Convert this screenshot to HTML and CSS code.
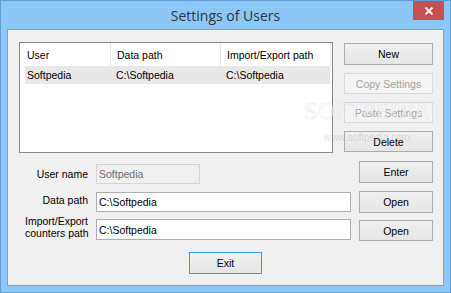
FILE: index.html
```html
<!DOCTYPE html>
<html lang="en">
  <head>
    <meta charset="UTF-8">
    <title>Settings of Users</title>
    <link rel="stylesheet" href="styles.css">
  </head>
  <body>
    <div class="window">
      <div class="titlebar">
        <span></span>
        <span class="title">Settings of Users</span>
        <a class="close" href="#close">
          <svg width="10" height="8" viewBox="0 0 10 8">
            <path d="M1.5 0.5 L8.5 7.5 M8.5 0.5 L1.5 7.5" stroke="#fff" stroke-width="1.8" fill="none"/>
          </svg>
        </a>
      </div>

      <div class="client">
        <div class="top">
          <div class="list">
            <div class="list-head">
              <div class="col col-user">User</div>
              <div class="col col-data">Data path</div>
              <div class="col col-io">Import/Export path</div>
            </div>
            <div class="list-row">
              <div class="cell cell-user">Softpedia</div>
              <div class="cell cell-data">C:\Softpedia</div>
              <div class="cell cell-io">C:\Softpedia</div>
            </div>
          </div>
          <div class="side-buttons">
            <button class="btn btn-new">New</button>
            <button class="btn" disabled>Copy Settings</button>
            <button class="btn" disabled>Paste Settings</button>
            <button class="btn">Delete</button>
          </div>
        </div>

        <div class="form">
          <div class="row row-user">
            <label class="label">User name</label>
            <input class="field field-short" value="Softpedia" disabled>
            <button class="btn btn-small">Enter</button>
          </div>
          <div class="row row-data">
            <label class="label">Data path</label>
            <input class="field" value="C:\Softpedia">
            <button class="btn btn-small">Open</button>
          </div>
          <div class="row row-io">
            <label class="label">Import/Export<br>counters path</label>
            <input class="field" value="C:\Softpedia">
            <button class="btn btn-small">Open</button>
          </div>
        </div>

        <div class="bottom">
          <button class="btn btn-exit">Exit</button>
        </div>

        <div class="watermark">
          <span class="wm-big">SOFTPEDIA</span>
          <span class="wm-small">www.softpedia.com</span>
        </div>
      </div>
    </div>
  </body>
</html>
```

FILE: styles.css
```css
/* Page */
body {
  margin: 0;
  font-family: "Liberation Sans", Arial, sans-serif;
  font-size: 10.5px;
  color: #000;
}

/* Window frame */
.window {
  width: 451px;
  height: 293px;
  box-sizing: border-box;
  border: 1px solid #5e9dd6;
  background-color: #8cc7f8;
  padding: 0 6px 6px;
  display: flex;
  flex-direction: column;
}

.titlebar {
  height: 28px;
  display: grid;
  grid-template-columns: 1fr auto 1fr;
}

.title {
  font-family: "Open Sans", "Noto Sans", sans-serif;
  font-size: 14px;
  color: #2a3440;
  line-height: 29px;
}

.close {
  justify-self: end;
  width: 31px;
  height: 19px;
  background-color: #c75050;
  display: flex;
  justify-content: center;
  align-items: center;
}

.client {
  flex: 1;
  position: relative;
  border: 1px solid #6ea6da;
  background-color: #f0f0f0;
}

/* List and side buttons */
.top {
  display: flex;
  padding: 12px 0 0 11px;
}

.list {
  width: 314px;
  height: 111px;
  box-sizing: border-box;
  border: 1px solid #828790;
  background-color: #fff;
}

.list-head {
  display: flex;
  height: 23px;
}

.col {
  box-sizing: border-box;
  border-right: 1px solid #e3e9f1;
  line-height: 24px;
  padding-left: 6px;
}

.col-user {
  width: 91px;
  padding-left: 7px;
}

.col-data,
.col-io {
  width: 110px;
}

.list-row {
  display: flex;
  margin-left: 5px;
  width: 305px;
  height: 18px;
  line-height: 18px;
  background-color: #e8e8e8;
}

.cell {
  box-sizing: border-box;
  padding-left: 6px;
}

.cell-user {
  width: 85px;
  padding-left: 2px;
}

.cell-data,
.cell-io {
  width: 110px;
}

.side-buttons {
  display: flex;
  flex-direction: column;
  gap: 8px;
  margin-left: 11px;
  padding-top: 1px;
}

.btn {
  font-family: "Liberation Sans", Arial, sans-serif;
  font-size: 10.5px;
  color: #000;
  width: 89px;
  height: 21px;
  padding: 0;
  box-sizing: border-box;
  border: 1px solid #acacac;
  background: linear-gradient(#f0f0f0, #e5e5e5);
}

.btn-new {
  height: 22px;
}

.btn:disabled {
  color: #a3a3a3;
  border-color: #d9d9d9;
  background: #f4f4f4;
}

/* Form rows */
.form {
  padding: 8px 10px 0 0;
}

.row {
  display: flex;
  align-items: flex-start;
  height: 22px;
}

.label {
  width: 80px;
  text-align: right;
  line-height: 12px;
  white-space: nowrap;
}

.field {
  font-family: "Liberation Sans", Arial, sans-serif;
  font-size: 10.5px;
  color: #000;
  width: 255px;
  height: 20px;
  margin: 0 0 0 8px;
  padding: 0 2px;
  box-sizing: border-box;
  border: 1px solid #abadb3;
  background-color: #fff;
}

.field:disabled {
  color: #6d6d6d;
  border-color: #d5d5d5;
  background-color: #f0f0f0;
}

.field-short {
  width: 104px;
}

.btn-small {
  width: 74px;
  height: 22px;
  margin-left: auto;
}

.row-user .label {
  margin-top: 7px;
}

.row-user .field {
  margin-top: 3px;
}

.row-data {
  margin-top: 8px;
}

.row-data .label {
  margin-top: 3px;
}

.row-data .field {
  margin-top: 1px;
}

.row-io {
  margin-top: 6px;
}

.row-io .label {
  margin-top: -4px;
  text-align: left;
  padding-left: 17px;
  box-sizing: border-box;
  width: 82px;
  margin-right: -2px;
}

.row-io .field {
  height: 21px;
}

.row-io .btn-small {
  height: 21px;
  margin-top: 1px;
}

.bottom {
  display: flex;
  justify-content: center;
  margin-top: 11px;
}

.btn-exit {
  width: 73px;
  height: 22px;
  border-color: #3399ff;
}

/* Watermark over the window */
.watermark {
  position: absolute;
  left: 294px;
  top: 70px;
  width: 130px;
  display: flex;
  flex-direction: column;
  align-items: center;
  pointer-events: none;
}

.wm-big {
  font-family: "DejaVu Sans", sans-serif;
  font-size: 21px;
  letter-spacing: 1px;
  color: rgba(255, 255, 255, 0.55);
  -webkit-text-stroke: 0.6px rgba(150, 150, 150, 0.25);
}

.wm-small {
  font-size: 10px;
  color: rgba(150, 150, 150, 0.3);
  margin-top: 8px;
}
```
